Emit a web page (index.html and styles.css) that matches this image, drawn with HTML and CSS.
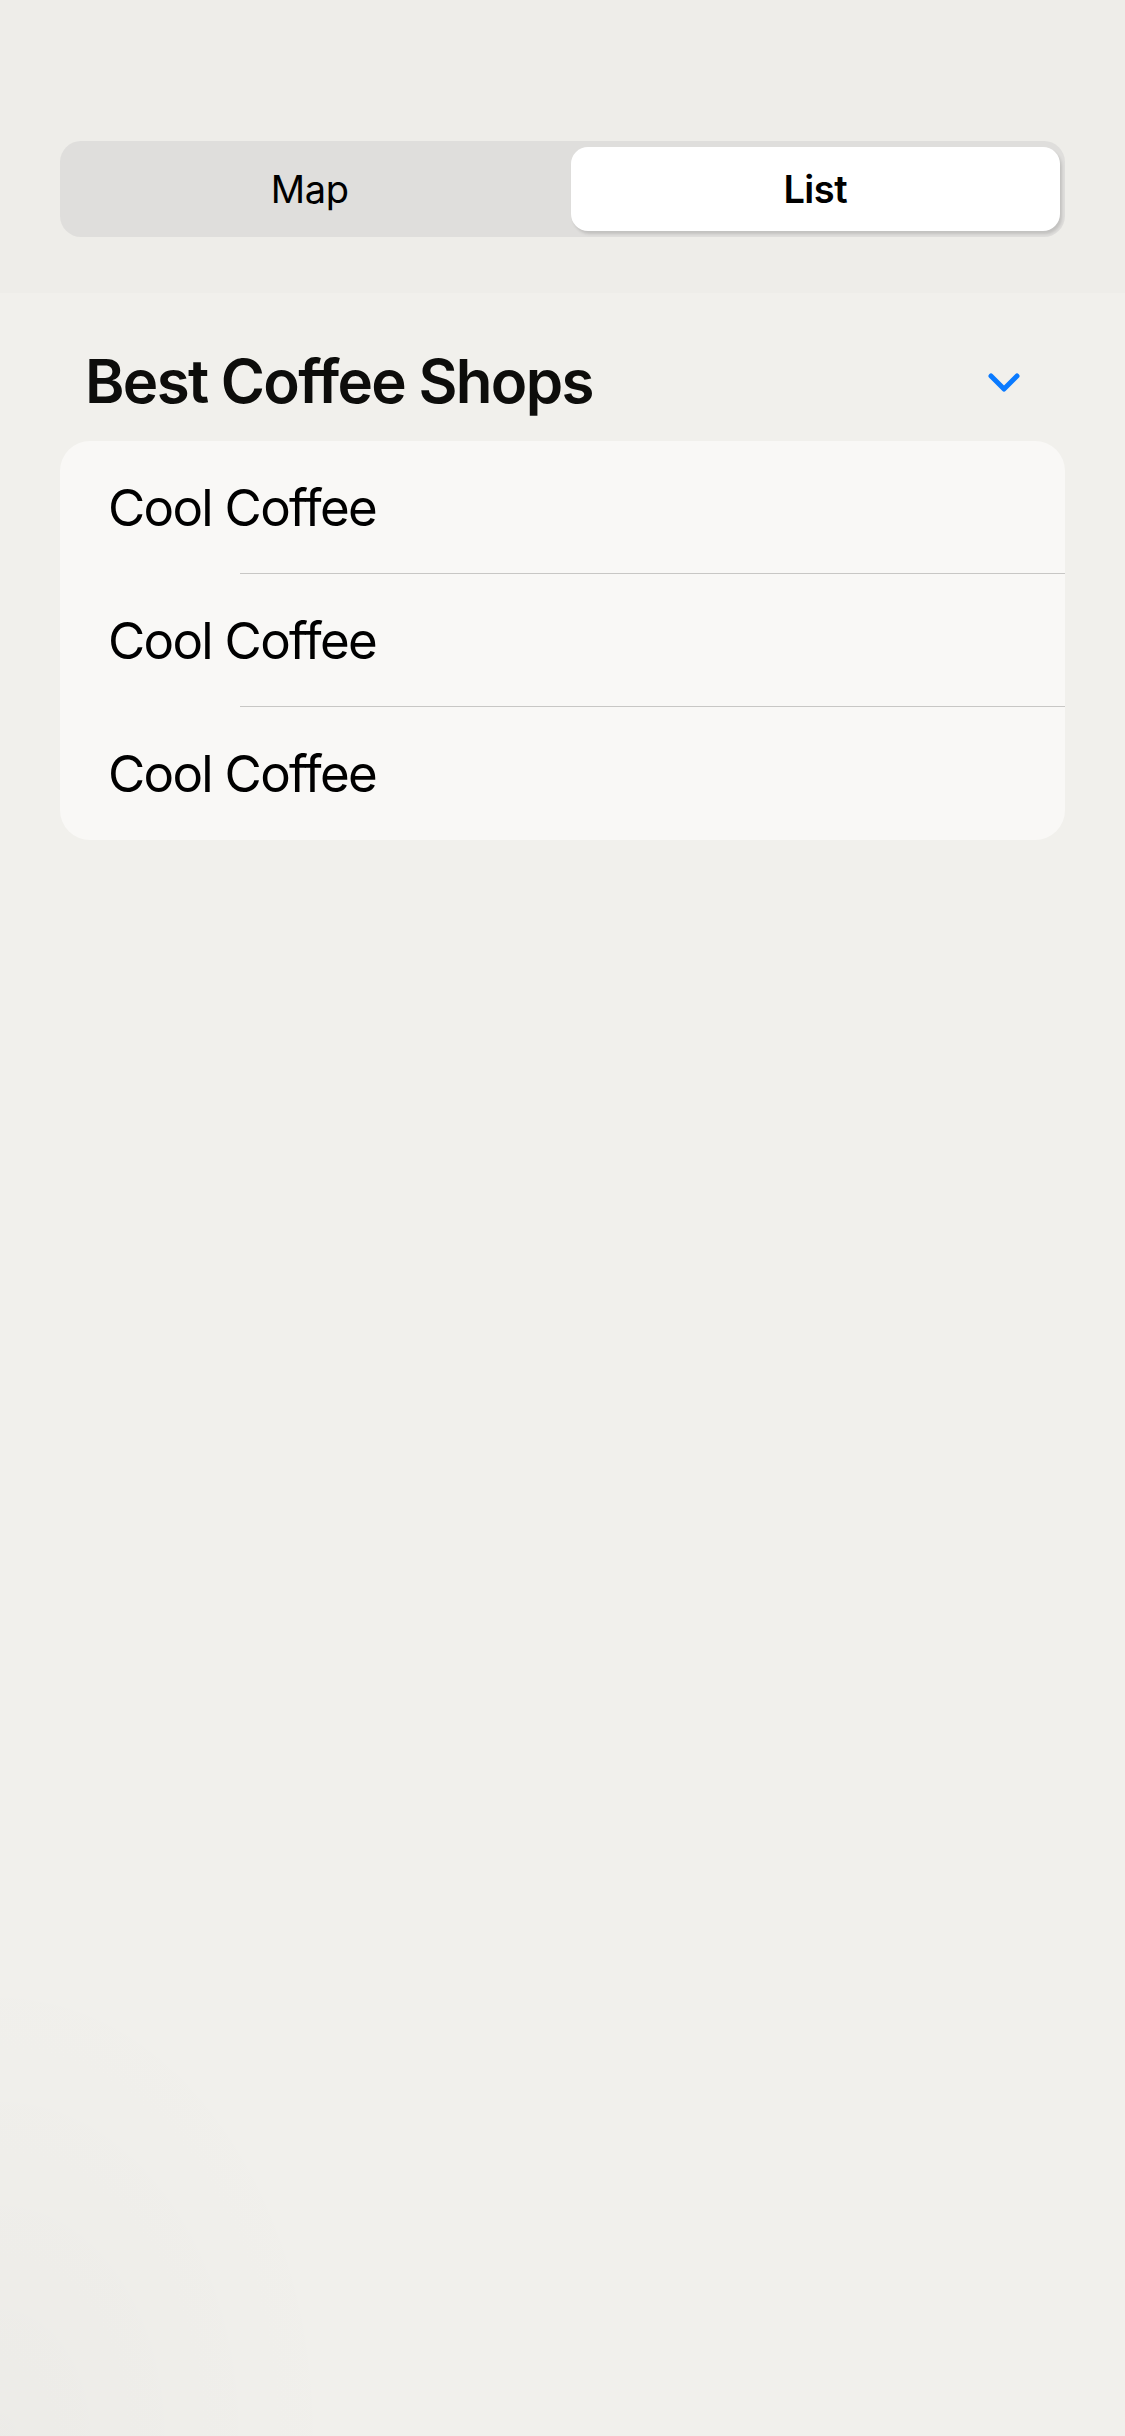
FILE: index.html
```html
<!DOCTYPE html>
<html>
<head>
<meta charset="utf-8">
<link rel="stylesheet" href="styles.css">
</head>
<body>
<div class="screen">
  <header class="topbar">
    <div class="segmented">
      <div class="seg">Map</div>
      <div class="seg seg-active">List</div>
    </div>
  </header>
  <main class="content">
    <div class="section-header">
      <h1 class="title">Best Coffee Shops</h1>
      <svg class="chevron" width="34" height="22" viewBox="0 0 34 22">
        <polyline points="4,4 17,17 30,4" fill="none" stroke="#0a7aff" stroke-width="5" stroke-linecap="round" stroke-linejoin="round"/>
      </svg>
    </div>
    <div class="card">
      <div class="row">Cool Coffee</div>
      <div class="sep"></div>
      <div class="row">Cool Coffee</div>
      <div class="sep"></div>
      <div class="row row-last">Cool Coffee</div>
    </div>
  </main>
</div>
</body>
</html>
```
FILE: styles.css
```css
html, body {
  margin: 0;
  padding: 0;
}
body {
  width: 1125px;
  height: 2436px;
  background: #f1f0ec;
  font-family: Inter, "Noto Sans", sans-serif;
  color: #000;
  overflow: hidden;
}
.screen {
  width: 1125px;
  height: 2436px;
  background:
    radial-gradient(ellipse 500px 700px at 0% 100%, rgba(0,0,0,0.018), rgba(0,0,0,0) 70%),
    #f1f0ec;
}
.topbar {
  background: #eeede9;
  padding: 141px 60px 56px;
}
.segmented {
  display: grid;
  grid-template-columns: 1fr 1fr;
  gap: 16px;
  padding: 6px 5px;
  height: 96px;
  box-sizing: border-box;
  background: #dfdedc;
  border-radius: 21px;
}
.seg {
  display: flex;
  align-items: center;
  justify-content: center;
  font-size: 38px;
  font-weight: 400;
  letter-spacing: -0.3px;
  border-radius: 17px;
}
.seg-active {
  background: #ffffff;
  font-weight: 600;
  letter-spacing: -0.5px;
  box-shadow: 2px 3px 3px rgba(0,0,0,0.13);
}
.content {
  padding: 52px 60px 0;
}
.section-header {
  display: flex;
  align-items: center;
  justify-content: space-between;
  padding: 0 44px 0 25px;
  margin-bottom: 24px;
}
.title {
  margin: 0;
  font-size: 60px;
  line-height: 72px;
  font-weight: 600;
  letter-spacing: -1.7px;
  color: #0d0d0b;
}
.chevron {
  display: block;
  margin-top: 4px;
}
.card {
  background: #f9f8f6;
  border-radius: 30px;
  overflow: hidden;
}
.row {
  height: 132px;
  display: flex;
  align-items: center;
  padding-left: 48px;
  font-size: 51px;
  letter-spacing: -1.7px;
  color: #000;
}
.row-last {
  height: 133px;
}
.sep {
  height: 1px;
  margin-left: 180px;
  background: #c8c7c5;
}
```
